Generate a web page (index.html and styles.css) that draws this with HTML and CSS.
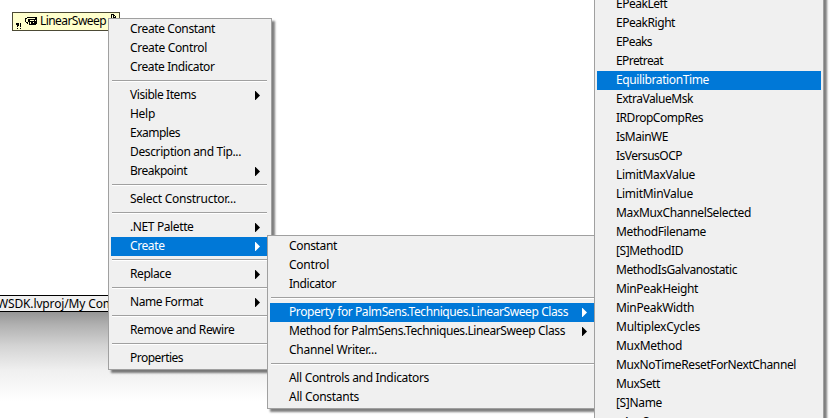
FILE: index.html
```
<!DOCTYPE html>
<html lang="en">
<head>
<meta charset="utf-8">
<title>LinearSweep</title>
<link rel="stylesheet" href="styles.css">
</head>
<body>
<main class="desktop">
  <div class="node">
    <svg class="node-icon" width="25" height="17" viewBox="0 0 25 17" shape-rendering="crispEdges"><path d="M3 10h3v3h-1v1h-1v-2h-1zM4 15h1v1h-1zM7 10h1v4h-1zM7 15h1v1h-1z"/><path d="M14 4h10v7h-1v1h-7v-1h-2v-1h-1v-1h-1V5h2z"/><path fill="#ffc" d="M14 5h8v1h-8zM13 6h2v3h-2zM15 9h1v2h-1zM17 7h4v1h-4zM17 9h1v2h-1zM20 9h1v1h-1zM22 7h1v1h-1z"/></svg>
    <span class="t" data-w="66">LinearSweep</span>
    <svg class="node-page" width="6" height="8" viewBox="0 0 6 8" shape-rendering="crispEdges"><path d="M0 0h3v1h1v1h1v6h-1V4H2V1H1v7H0zM3 2v1h1V2z"/></svg>
  </div>
  <footer class="status"><span class="t" data-w="147">WSDK.lvproj/My Computer</span></footer>
  <div class="fade"></div>
  <nav class="menu main-menu" id="main"></nav>
  <nav class="menu create-menu" id="create"></nav>
  <nav class="menu property-menu" id="property"></nav>
</main>
<script src="menus.js"></script>
</body>
</html>
```
FILE: styles.css
```
* { box-sizing: border-box; }
body { margin: 0; background: #fff; color: #000; font: 12px/19px "Noto Sans", "Open Sans", sans-serif; }
.desktop { position: relative; width: 836px; height: 418px; overflow: hidden; }
.t { display: inline-block; white-space: pre; }
.node { position: absolute; left: 12px; top: 12px; width: 108px; height: 19px; border: 1px solid #4c4a35; background: #ffffcc; display: flex; line-height: 16px; }
.node-icon { flex: none; margin-right: 2px; }
.node-page { margin: 1px 0 0 5px; }
.status { position: absolute; left: 0; top: 295px; width: 108px; height: 17px; overflow: hidden; border: solid #000; border-width: 1px 0; background: #f0f0f0; line-height: 15px; }
.status .t { margin-left: -3px; }
.fade { position: absolute; left: 0; top: 312px; width: 270px; height: 90px; background: linear-gradient(#969696, #b2b2b2 15%, #d4d4d4 38%, #f0f0f0 65%, #fff); }
.menu { position: absolute; border: 1px solid #a0a0a0; padding: 1px 2px; background: #f0f0f0; box-shadow: 3px 3px 2px #00000080; }
.main-menu { left: 108px; top: 18px; width: 164px; }
.create-menu { left: 267px; top: 235px; width: 340px; }
.property-menu { left: 594px; top: -7px; width: 230px; height: 440px; }
.item { display: flex; align-items: center; justify-content: space-between; height: 19px; padding: 0 10px 0 19px; }
.item .t { padding-bottom: 2px; }
.main-menu .item { padding-right: 9px; }
.create-menu .item { padding-right: 17px; }
.item.selected { background: #0078d7; color: #fff; }
.separator { height: 9px; padding: 3px 1px 0; }
.main-menu .separator { padding-right: 2px; }
.separator::before { content: ""; display: block; height: 1px; background: #a0a0a0; border-bottom: 1px solid #fff; box-sizing: content-box; }
.arrow { width: 5px; height: 9px; fill: currentColor; }
```
FILE: menus.js
```
const menus = {
  main: [["Create Constant", 85], ["Create Control", 77], ["Create Indicator", 84.5], null,
    ["Visible Items", 66, ">"], ["Help", 25], ["Examples", 50], ["Description and Tip...", 111], ["Breakpoint", 57, ">"], null,
    ["Select Constructor...", 106], null, [".NET Palette", 63.5, ">"], ["Create", 34.5, ">*"], null,
    ["Replace", 41, ">"], null, ["Name Format", 73, ">"], null, ["Remove and Rewire", 104.5], null, ["Properties", 53]],
  create: [["Constant", 48], ["Control", 40], ["Indicator", 47], null,
    ["Property for PalmSens.Techniques.LinearSweep Class", 279, ">*"], ["Method for PalmSens.Techniques.LinearSweep Class", 276, ">"],
    ["Channel Writer...", 88], null, ["All Controls and Indicators", 140], ["All Constants", 70]],
  property: [["EPeakLeft", 51], ["EPeakRight", 59], ["EPeaks", 36], ["EPretreat", 47], ["EquilibrationTime", 93, "*"],
    ["ExtraValueMsk", 77], ["IRDropCompRes", 87], ["IsMainWE", 52], ["IsVersusOCP", 66], ["LimitMaxValue", 79],
    ["LimitMinValue", 77], ["MaxMuxChannelSelected", 135], ["MethodFilename", 90], ["[S]MethodID", 67],
    ["MethodIsGalvanostatic", 121], ["MinPeakHeight", 82], ["MinPeakWidth", 78], ["MultiplexCycles", 84],
    ["MuxMethod", 66], ["MuxNoTimeResetForNextChannel", 180], ["MuxSett", 44], ["[S]Name", 46], ["nAvgScans", 57]]
};
for (const [id, items] of Object.entries(menus)) {
  document.getElementById(id).innerHTML = items.map(item => {
    if (!item) return '<div class="separator"></div>';
    const [label, width, flags = ""] = item;
    const arrow = flags.includes(">") ? '<svg class="arrow" viewBox="0 0 5 9"><path d="M0 0h.5L5 4.500.5 9H0z"/></svg>' : "";
    return `<div class="item${flags.includes("*") ? " selected" : ""}"><span class="t" data-w="${width}">${label}</span>${arrow}</div>`;
  }).join("");
}
for (const el of document.querySelectorAll(".t")) {
  const extra = Number(el.dataset.w) - el.getBoundingClientRect().width;
  el.style.letterSpacing = `${extra / el.textContent.length}px`;
}
```
